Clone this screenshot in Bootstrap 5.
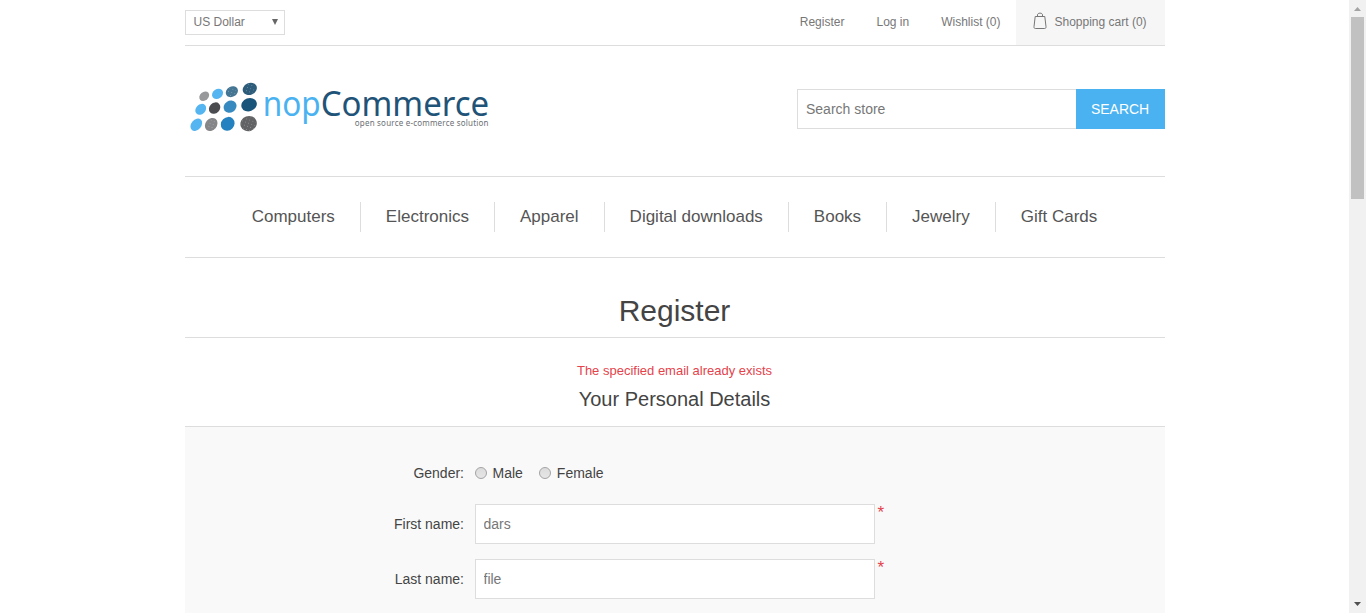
<!DOCTYPE html>
<html lang="en">
<head>
<meta charset="utf-8">
<meta name="viewport" content="width=device-width, initial-scale=1">
<title>nopCommerce. Register</title>
<link href="https://cdn.jsdelivr.net/npm/bootstrap@5.3.0/dist/css/bootstrap.min.css" rel="stylesheet">
<style>
body{font:14px/1.3 "Liberation Sans",Arial,sans-serif;color:#444;height:100vh;overflow:hidden}
a{color:inherit;text-decoration:none}
.page-view{height:100vh;overflow:hidden}
.wrapper{width:980px}
.line-b{border-bottom:1px solid #ddd}
.topbar{height:46px;font-size:12px;color:#777}
.currency{width:100px;height:25px;border:1px solid #ddd;padding:1px 5px 0 8px;margin-top:10px}
.top-link{height:45px;line-height:44px;margin-right:32px}
.top-link.last{margin-right:15px}
.cart-link{height:45px;width:149px;background:#f6f6f6;padding-left:17.5px;gap:7.5px;line-height:44px}
.cart-link svg{margin-top:12px}
.brand-row{height:131px}
.logo{width:310px;height:65px;margin-top:29px}
.search{width:368px;height:40px;margin-top:43px}
.search input{border:1px solid #ddd;border-right:0;padding:0 8.5px;color:#777;width:279.5px;outline:0}
.search input::placeholder{color:#777}
.search button{background:#4ab2f1;color:#fff;border:0;width:89px;font-size:14px}
.main-menu{height:81px;padding-top:25px}
.main-menu a{height:30px;line-height:29px;padding:0 25px;font-size:17px;color:#555}
.main-menu a+a{border-left:1px solid #ddd}
.page-title{height:80px;font-size:30px;line-height:36px;padding-top:35px;margin:0;font-weight:400}
.form-error{color:#e4434b;font-size:13px;line-height:17px;margin-top:24px}
.section-title{font-size:20px;line-height:26px;margin:7px 0 0;font-weight:400;height:40px}
.fieldset{background:#f9f9f9;border-top:1px solid #ddd;padding-top:26px;height:240px}
.form-label-cell{width:279.5px;text-align:right;margin-right:10.5px}
.form-row{height:40px;margin-bottom:15px}
.gender-row{height:40px;margin-bottom:11px}
.form-row input{width:400px;height:40px;border:1px solid #ddd;padding:0 8px;color:#777;outline:0}
.required{color:#e4434b;font-size:17px;line-height:20px;margin:-1px 0 0 3px}
.radio-dot{width:12px;height:12px;border:1px solid #a3a3a3;border-radius:50%;background:linear-gradient(#dcdcdc,#e6e6e6);margin-right:6px}
.scroll{width:17px;background:#f1f1f1}
.thumb{width:13px;height:182px;background:#c1c1c1}
</style>
</head>
<body>
<div class="d-flex page-view">
<div class="flex-grow-1">
<div class="wrapper mx-auto">
  <header>
    <div class="topbar line-b d-flex justify-content-between">
      <div class="currency d-flex align-items-center justify-content-between"><span>US Dollar</span>
        <svg width="8" height="8" viewBox="0 0 8 8"><path d="M1 0h6L4 6z" fill="#666"/></svg></div>
      <nav class="d-flex">
        <a class="top-link" href="#">Register</a>
        <a class="top-link" href="#">Log in</a>
        <a class="top-link last" href="#">Wishlist (0)</a>
        <a class="cart-link d-flex" href="#"><svg width="14" height="18" viewBox="0 0 14 18" fill="none" stroke="#777"><path d="M2.200 4.500h9.600l1.200 10.200c.1 1.200-.3 1.800-1.300 1.800H2.300C1.300 16.500.9 15.900 1 14.700zM4.500 4.500V2.800C4.500.6 9.500.6 9.500 2.800V4.500"/></svg><span>Shopping cart (0)</span></a>
      </nav>
    </div>
    <div class="brand-row line-b d-flex justify-content-between">
      <a class="logo" href="#"><svg class="d-block" width="310" height="65" viewBox="0 0 310 65">
        <defs>
          <pattern id="grain" width="3.300" height="3.300" patternUnits="userSpaceOnUse" patternTransform="rotate(20)"><path d="M0 0h.8v.8H0z" fill="#fff" opacity=".35"/></pattern>
        </defs>
        <g id="dots">
          <ellipse cx="19.300" cy="21.400" rx="5.400" ry="4.200" transform="rotate(-40 19 21.400)" fill="#98999b"/>
          <ellipse cx="32.600" cy="19" rx="5.900" ry="4.700" transform="rotate(-35 32.300 19)" fill="#55b5f0"/>
          <ellipse cx="46.900" cy="16.800" rx="6.400" ry="5.100" transform="rotate(-30 46.700 16.800)" fill="#447593"/>
          <ellipse cx="64.800" cy="14" rx="7.300" ry="5.900" transform="rotate(-25 64.500 14)" fill="#2e5d7c"/>
          <ellipse cx="15.800" cy="34.500" rx="6" ry="4.800" transform="rotate(-45 15.500 34.500)" fill="#55b5f0"/>
          <ellipse cx="29.700" cy="33.300" rx="6.200" ry="5.200" transform="rotate(-45 29.400 33.300)" fill="#4b4c50"/>
          <ellipse cx="45.100" cy="31.800" rx="6.800" ry="5.800" transform="rotate(-35 44.800 31.800)" fill="#368abf"/>
          <ellipse cx="64.100" cy="29.800" rx="7.900" ry="6.500" transform="rotate(-20 63.800 29.800)" fill="#19547a"/>
          <ellipse cx="11.400" cy="50" rx="6.900" ry="5" transform="rotate(-50 11.100 50)" fill="#55b5f0"/>
          <ellipse cx="26.300" cy="49.700" rx="7.100" ry="5.700" transform="rotate(-50 26 49.700)" fill="#858688"/>
          <ellipse cx="42.800" cy="49" rx="7.300" ry="6.500" transform="rotate(-45 42.500 49)" fill="#2382bf"/>
          <ellipse cx="63.600" cy="48.700" rx="8.300" ry="7.500" transform="rotate(-20 63.300 48.700)" fill="#626365"/>
        </g>
        <g fill="url(#grain)"><circle cx="63.600" cy="48.700" r="7.300"/><circle cx="26.300" cy="49.700" r="5"/><circle cx="47" cy="16.800" r="4.500"/><circle cx="64.800" cy="14" r="5"/></g>
        <g font-family="'Noto Sans',sans-serif">
          <text x="77.700" y="41" font-size="34.500" textLength="58" lengthAdjust="spacingAndGlyphs" fill="#4ab2f1">nop</text>
          <text x="135.700" y="41" font-size="34.500" textLength="168.500" lengthAdjust="spacingAndGlyphs" fill="#1f5478">Commerce</text>
          <text x="169.800" y="51" font-size="8" textLength="133.700" lengthAdjust="spacing" fill="#6c7074">open source e-commerce solution</text>
        </g>
      </svg></a>
      <form class="search d-flex"><input type="text" placeholder="Search store" aria-label="Search store"><button type="button">SEARCH</button></form>
    </div>
    <nav class="main-menu line-b d-flex justify-content-center">
      <a href="#">Computers</a><a href="#">Electronics</a><a href="#">Apparel</a><a href="#">Digital downloads</a><a href="#">Books</a><a href="#">Jewelry</a><a href="#">Gift Cards</a>
    </nav>
  </header>
  <main>
    <h1 class="page-title line-b text-center">Register</h1>
    <div class="form-error text-center">The specified email already exists</div>
    <h2 class="section-title text-center">Your Personal Details</h2>
    <div class="fieldset">
      <div class="gender-row d-flex align-items-center"><span class="form-label-cell">Gender:</span><span class="radio-dot"></span><span class="me-3">Male</span><span class="radio-dot"></span><span>Female</span></div>
      <div class="form-row d-flex"><label class="form-label-cell align-self-center" for="first">First name:</label><input id="first" type="text" value="dars"><span class="required">*</span></div>
      <div class="form-row d-flex"><label class="form-label-cell align-self-center" for="last">Last name:</label><input id="last" type="text" value="file"><span class="required">*</span></div>
    </div>
  </main>
</div>
</div>
<div class="scroll d-flex flex-column align-items-center flex-shrink-0">
  <svg width="17" height="17" viewBox="0 0 17 17"><path d="M5 11h7L8.500 7z" fill="#a3a3a3"/></svg>
  <div class="thumb"></div>
  <svg class="mt-auto" width="17" height="17" viewBox="0 0 17 17"><path d="M5 6h7L8.500 10z" fill="#505050"/></svg>
</div>
</div>
<script src="https://cdn.jsdelivr.net/npm/bootstrap@5.3.0/dist/js/bootstrap.bundle.min.js"></script>
</body>
</html>
